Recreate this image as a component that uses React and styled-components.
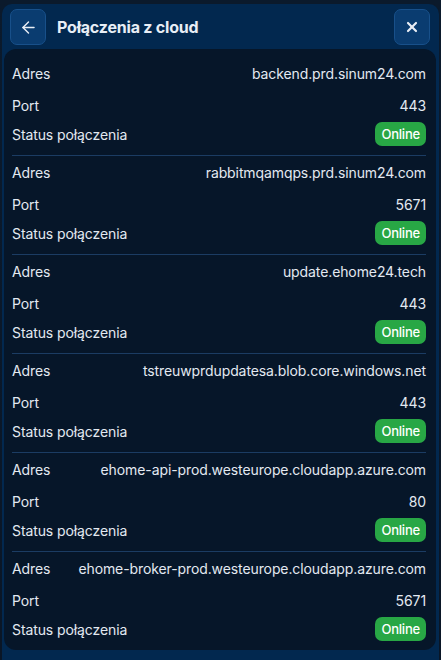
import React from 'react';
import styled, { createGlobalStyle } from 'styled-components';
import { ArrowLeft, X } from 'lucide-react';

const GlobalStyle = createGlobalStyle`
    html, body {
        margin:0;
        padding:0;
        background:#0a1727;
        font-family:Inter, "Noto Sans", sans-serif;
    }
`;

const Page = styled.div`
    width:441px;
    height:660px;
    padding-top:4px;
    box-sizing:border-box;
    overflow:hidden;
    background:linear-gradient(180deg, #0b1a2c 0%, #0a1626 100%);
`;

const Panel = styled.div`
    margin:0 2px;
    height:100%;
    padding:5px 3px 0 2px;
    box-sizing:border-box;
    background:#02284f;
    border-radius:10px 10px 0 0;
`;

const Header = styled.div`
    display:flex;
    align-items:center;
    padding:0 6px 0 6px;
    height:36px;
`;

const IconButton = styled.button`
    width:36px;
    height:36px;
    display:flex;
    align-items:center;
    justify-content:center;
    background:#0a3c70;
    border:1px solid #18508a;
    border-radius:7px;
    color:#e9eef5;
    padding:0;
    margin-left:${props => props.$right ? 'auto' : '0'};
`;

const Title = styled.h1`
    margin:0 0 0 11px;
    font-size:16px;
    font-weight:700;
    color:#e8eef6;
    letter-spacing:-0.2px;
`;

const Card = styled.div`
    margin-top:4px;
    padding:8px 10px 8px 8px;
    background:#061629;
    border-radius:12px;
`;

const Group = styled.div`
    padding-bottom:8px;
    border-bottom:1px solid #1b3c63;

    &:last-child{
        border-bottom:none;
        padding-bottom:0;
    }
`;

const Row = styled.div`
    display:flex;
    align-items:center;
    justify-content:space-between;
    height:${props => props.$h}px;
    font-size:14px;
    letter-spacing:-0.1px;
    color:#e3e9f1;
`;

const Value = styled.span`
    text-align:right;
    white-space:nowrap;
`;

const Badge = styled.span`
    height:24px;
    padding:0 6px;
    display:flex;
    align-items:center;
    background:#28a745;
    border-radius:7px;
    color:#fff;
    font-size:13px;
    font-weight:500;
    letter-spacing:-0.2px;
`;

const connections = [
    { address:'backend.prd.sinum24.com', port:443 },
    { address:'rabbitmqamqps.prd.sinum24.com', port:5671 },
    { address:'update.ehome24.tech', port:443 },
    { address:'tstreuwprdupdatesa.blob.core.windows.net', port:443 },
    { address:'ehome-api-prod.westeurope.cloudapp.azure.com', port:80 },
    { address:'ehome-broker-prod.westeurope.cloudapp.azure.com', port:5671 },
];

const App = () => {
    return (
        <Page>
            <GlobalStyle />
            <Panel>
                <Header>
                    <IconButton><ArrowLeft size={19} strokeWidth={1.8} /></IconButton>
                    <Title>Połączenia z cloud</Title>
                    <IconButton $right><X size={16} strokeWidth={3.2} /></IconButton>
                </Header>
                <Card>
                    {connections.map(c => (
                        <Group key={c.address}>
                            <Row $h={32}><span>Adres</span><Value>{c.address}</Value></Row>
                            <Row $h={32}><span>Port</span><Value>{c.port}</Value></Row>
                            <Row $h={26}><span>Status połączenia</span><Badge>Online</Badge></Row>
                        </Group>
                    ))}
                </Card>
            </Panel>
        </Page>
    );
}

export default App;
